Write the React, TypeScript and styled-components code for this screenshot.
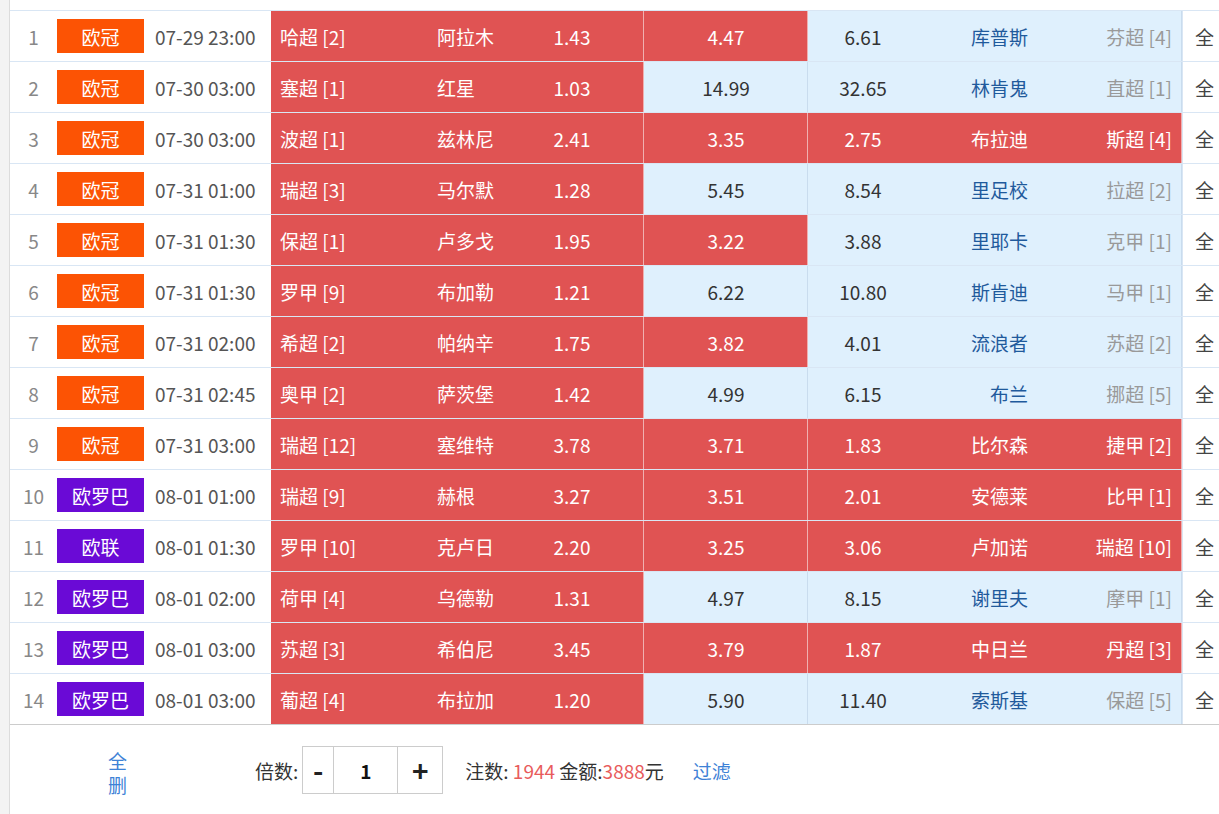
import React from 'react';
import styled, { createGlobalStyle } from 'styled-components';

const GlobalStyle = createGlobalStyle`
  html, body { margin: 0; padding: 0; background: #f3f3f3; }
  body { font-family: "Microsoft YaHei", "Noto Sans CJK SC", sans-serif; overflow: hidden; }
`;

type Row = [string, string, string, string, string, string, boolean, string, string, string, string, string, boolean];

const rows: Row[] = [
  ['1', '欧冠', '07-29 23:00', '哈超 [2]', '阿拉木', '1.43', true, '4.47', '6.61', '库普斯', '芬超 [4]', '', false],
  ['2', '欧冠', '07-30 03:00', '塞超 [1]', '红星', '1.03', false, '14.99', '32.65', '林肯鬼', '直超 [1]', '', false],
  ['3', '欧冠', '07-30 03:00', '波超 [1]', '兹林尼', '2.41', true, '3.35', '2.75', '布拉迪', '斯超 [4]', '', true],
  ['4', '欧冠', '07-31 01:00', '瑞超 [3]', '马尔默', '1.28', false, '5.45', '8.54', '里足校', '拉超 [2]', '', false],
  ['5', '欧冠', '07-31 01:30', '保超 [1]', '卢多戈', '1.95', true, '3.22', '3.88', '里耶卡', '克甲 [1]', '', false],
  ['6', '欧冠', '07-31 01:30', '罗甲 [9]', '布加勒', '1.21', false, '6.22', '10.80', '斯肯迪', '马甲 [1]', '', false],
  ['7', '欧冠', '07-31 02:00', '希超 [2]', '帕纳辛', '1.75', true, '3.82', '4.01', '流浪者', '苏超 [2]', '', false],
  ['8', '欧冠', '07-31 02:45', '奥甲 [2]', '萨茨堡', '1.42', false, '4.99', '6.15', '布兰', '挪超 [5]', '', false],
  ['9', '欧冠', '07-31 03:00', '瑞超 [12]', '塞维特', '3.78', true, '3.71', '1.83', '比尔森', '捷甲 [2]', '', true],
  ['10', '欧罗巴', '08-01 01:00', '瑞超 [9]', '赫根', '3.27', true, '3.51', '2.01', '安德莱', '比甲 [1]', '', true],
  ['11', '欧联', '08-01 01:30', '罗甲 [10]', '克卢日', '2.20', true, '3.25', '3.06', '卢加诺', '瑞超 [10]', '', true],
  ['12', '欧罗巴', '08-01 02:00', '荷甲 [4]', '乌德勒', '1.31', false, '4.97', '8.15', '谢里夫', '摩甲 [1]', '', false],
  ['13', '欧罗巴', '08-01 03:00', '苏超 [3]', '希伯尼', '3.45', true, '3.79', '1.87', '中日兰', '丹超 [3]', '', true],
  ['14', '欧罗巴', '08-01 03:00', '葡超 [4]', '布拉加', '1.20', false, '5.90', '11.40', '索斯基', '保超 [5]', '', false],
];

const RED = '#e05353';
const BLUE = '#dff0fd';

const Page = styled.div`
  margin-left: 9px;
  border-left: 1px solid #dcdcdc;
  background: #fff;
  height: 814px;
  padding-top: 10px;
  box-sizing: border-box;
`;

const TableRow = styled.div`
  display: flex;
  height: 51px;
  border-top: 1px solid #d9e6f4;
  box-sizing: border-box;
  font-size: 19px;
  color: #333;
`;

const Cell = styled.div<{ $w: number; $align?: string }>`
  width: ${p => p.$w}px;
  flex: none;
  display: flex;
  align-items: center;
  justify-content: ${p => p.$align || 'center'};
`;

const Index = styled(Cell)`
  color: #888;
`;

const Tag = styled.div<{ $purple: boolean }>`
  width: 87px;
  height: 34px;
  display: flex;
  align-items: center;
  justify-content: center;
  background: ${p => (p.$purple ? '#6a0ad6' : '#fc5304')};
  color: #fff;
`;

const Time = styled(Cell)`
  color: #555;
  white-space: nowrap;
`;

const Block = styled.div<{ $red: boolean; $w: number }>`
  width: ${p => p.$w}px;
  flex: none;
  display: flex;
  align-items: center;
  background: ${p => (p.$red ? RED : BLUE)};
  color: ${p => (p.$red ? '#fff' : '#333')};
  border-right: 1px solid ${p => (p.$red ? '#f0b0b0' : '#c9dcee')};
  box-sizing: border-box;
`;

const Text = styled.span<{ $w: number; $align?: string; $color?: string }>`
  width: ${p => p.$w}px;
  flex: none;
  text-align: ${p => p.$align || 'left'};
  color: ${p => p.$color || 'inherit'};
  white-space: nowrap;
`;

const All = styled(Cell)`
  border-left: 1px solid #d9e6f4;
  box-sizing: border-box;
  justify-content: flex-start;
  padding-left: 12px;
  color: #444;
`;

const Footer = styled.div`
  height: 90px;
  border-top: 1px solid #ccc;
  display: flex;
  align-items: center;
  font-size: 19px;
  color: #333;
`;

const ClearAll = styled.div`
  width: 20px;
  margin-left: 98px;
  margin-right: 127px;
  color: #3e82d6;
  line-height: 24px;
  padding-top: 6px;
`;

const Stepper = styled.div`
  display: flex;
  height: 46px;
  border: 1px solid #ccc;
  margin-left: 4px;
  margin-right: 22px;
`;

const StepBtn = styled.div<{ $w: number }>`
  width: ${p => p.$w}px;
  display: flex;
  align-items: center;
  justify-content: center;
  font-size: 28px;
  font-weight: bold;
  color: #222;
`;

const StepValue = styled.div`
  width: 63px;
  border-left: 1px solid #ccc;
  border-right: 1px solid #ccc;
  display: flex;
  align-items: center;
  justify-content: center;
  font-weight: bold;
  color: #111;
`;

const Num = styled.span`
  color: #e85c5c;
`;

const Filter = styled.span`
  color: #3e82d6;
  margin-left: 29px;
`;

export default function App() {
  return (
    <>
      <GlobalStyle />
      <Page>
        {rows.map(r => {
          const awayRed = r[12];
          return (
            <TableRow key={r[0]}>
              <Index $w={47}>{r[0]}</Index>
              <Cell $w={98} $align="flex-start">
                <Tag $purple={r[1] !== '欧冠'}>{r[1]}</Tag>
              </Cell>
              <Time $w={116} $align="flex-start">{r[2]}</Time>
              <Block $red $w={373}>
                <Text $w={166} style={{ paddingLeft: 9, boxSizing: 'border-box' }}>{r[3]}</Text>
                <Text $w={116}>{r[4]}</Text>
                <Text $w={38} $align="center">{r[5]}</Text>
              </Block>
              <Block $red={r[6]} $w={164}>
                <Text $w={164} $align="center">{r[7]}</Text>
              </Block>
              <Block $red={awayRed} $w={374}>
                <Text $w={110} $align="center">{r[8]}</Text>
                <Text $w={110} $align="right" $color={awayRed ? '#fff' : '#1f5a9c'}>{r[9]}</Text>
                <Text $w={144} $align="right" $color={awayRed ? '#fff' : '#999'}>{r[10]}</Text>
              </Block>
              <All $w={37}>全</All>
            </TableRow>
          );
        })}
        <Footer>
          <ClearAll>全删</ClearAll>
          倍数:
          <Stepper>
            <StepBtn $w={30}>-</StepBtn>
            <StepValue>1</StepValue>
            <StepBtn $w={44}>+</StepBtn>
          </Stepper>
          注数: <Num>&nbsp;1944&nbsp;</Num>金额:<Num>3888</Num>元
          <Filter>过滤</Filter>
        </Footer>
      </Page>
    </>
  );
}
